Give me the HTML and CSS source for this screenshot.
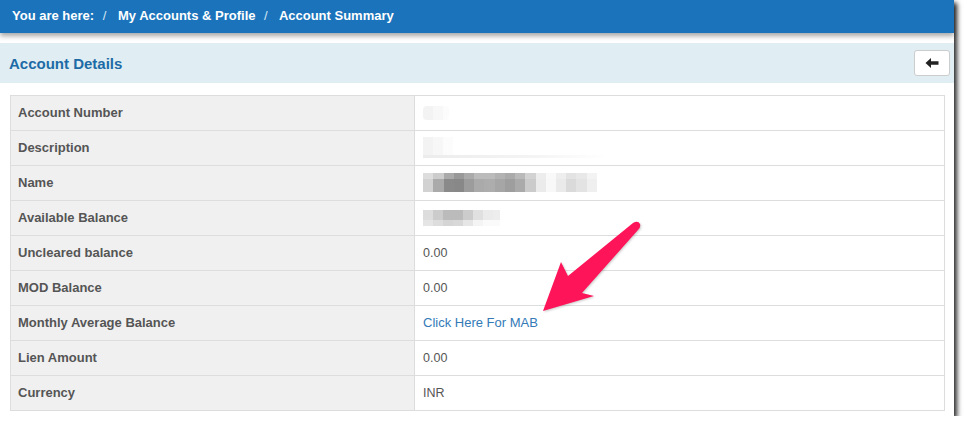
FILE: index.html
```html
<!DOCTYPE html>
<html lang="en">
<head>
  <meta charset="utf-8">
  <title>Account Summary</title>
  <link rel="stylesheet" href="styles.css">
</head>
<body>
<div class="page">
  <div class="breadcrumb">
    <span>You are here:</span>
    <span class="sep">/</span>
    <span>My Accounts &amp; Profile</span>
    <span class="sep">/</span>
    <span>Account Summary</span>
  </div>

  <div class="panel">
    <div class="panel-heading">
      <h3>Account Details</h3>
      <button class="btn-back" aria-label="Back">
        <svg width="14" height="12" viewBox="0 0 14 12">
          <path d="M0.5 6 L6 1 L6 4.2 L13.5 4.2 L13.5 7.8 L6 7.8 L6 11 Z" fill="#222"/>
        </svg>
      </button>
    </div>
    <div class="panel-body">
      <table class="details">
        <tr><th>Account Number</th><td><span class="blur blur-acct"></span></td></tr>
        <tr><th>Description</th><td><span class="blur blur-desc"></span></td></tr>
        <tr><th>Name</th><td><span class="blur blur-name"></span></td></tr>
        <tr><th>Available Balance</th><td><span class="blur blur-bal"></span></td></tr>
        <tr><th>Uncleared balance</th><td>0.00</td></tr>
        <tr><th>MOD Balance</th><td>0.00</td></tr>
        <tr><th>Monthly Average Balance</th><td><a href="#">Click Here For MAB</a></td></tr>
        <tr><th>Lien Amount</th><td>0.00</td></tr>
        <tr><th>Currency</th><td>INR</td></tr>
      </table>
    </div>
  </div>

  <!-- annotation arrow pointing at the MAB link -->
  <svg class="annotation" width="110" height="105" viewBox="0 0 110 105">
    <path d="M3 101 L21 52 L28 66 L93 13 Q98 10 100 14 Q101 17 98 20 L42 83 L54 86 Z" fill="#fe1458"/>
  </svg>
</div>
</body>
</html>
```

FILE: styles.css
```css
body {
  margin: 0;
  background: #fff;
  font-family: "Liberation Sans", Arial, sans-serif;
}

.page {
  position: relative;
  width: 954px;
  height: 416px;
  background: #fff;
  box-shadow: 3px 3px 5px rgba(0, 0, 0, 0.85);
}

/* top bar */
.breadcrumb {
  position: relative;
  z-index: 1;
  height: 33px;
  line-height: 32px;
  padding-left: 12px;
  background: #1b74bb;
  color: #fff;
  font-size: 13px;
  font-weight: bold;
  box-shadow: 0 3px 5px rgba(0, 0, 0, 0.35);
}

.breadcrumb .sep {
  font-weight: normal;
  color: #d6e6f3;
  margin: 0 8px 0 5px;
}

/* panel */
.panel {
  margin-top: 10px;
}

.panel-heading {
  display: flex;
  align-items: center;
  justify-content: space-between;
  height: 40px;
  padding: 0 4px 0 9px;
  background: #e0eef3;
}

.panel-heading h3 {
  margin: 0;
  font-size: 15px;
  font-weight: bold;
  color: #1d6ba6;
}

.btn-back {
  display: flex;
  align-items: center;
  justify-content: center;
  width: 36px;
  height: 26px;
  padding: 0;
  background: #fff;
  border: 1px solid #ccc;
  border-radius: 3px;
  cursor: pointer;
}

.panel-body {
  padding: 12px 9px 0 10px;
}

/* details table */
.details {
  width: 100%;
  border-collapse: collapse;
  border: 1px solid #ddd;
  font-size: 13px;
  color: #555;
}

.details th,
.details td {
  height: 33px;
  padding: 0 8px 1px 7px;
  border: 1px solid #ddd;
  text-align: left;
  vertical-align: middle;
}

.details th {
  width: 388px;
  background: #f0f0f0;
  font-weight: bold;
}

.details td {
  padding-left: 8px;
  font-size: 12.5px;
  background: #fff;
}

.details a {
  color: #337ab7;
  font-size: 13px;
  text-decoration: none;
}

/* masked values */
.blur {
  display: block;
}

.blur-acct {
  width: 26px;
  height: 14px;
  background: linear-gradient(to right, #f0f0f0 0 10px, #f6f6f6 10px 20px, #fbfbfb 20px 26px);
  border-radius: 4px;
  opacity: 0.8;
}

.blur-desc {
  width: 184px;
  height: 21px;
  background:
    linear-gradient(to right, #f3f3f3 0 10px, #f7f7f7 10px 20px, #fcfcfc 20px 30px, #fff 30px) top / 100% 18px no-repeat,
    linear-gradient(to right, #ececec, #f4f4f4 60%, #fff) bottom / 100% 3px no-repeat;
}

.blur-name {
  width: 174px;
  height: 19px;
  background:
    linear-gradient(to right, #ddd 0 10px, #ccc 10px 21px, #aaa 21px 31px, #999 31px 41px, #aaa 41px 51px, #bbb 51px 61px, #bbb 61px 72px, #b2b2b2 72px 82px, #aaa 82px 92px, #b9b9b9 92px 102px, #d2d2d2 102px 113px, #ededed 113px 123px, #f9f9f9 123px 133px, #eee 133px 143px, #e3e3e3 143px 153px, #e8e8e8 153px 164px, #f3f3f3 164px 174px) top / 100% 6px no-repeat,
    linear-gradient(to right, #d2d2d2 0 10px, #aaa 10px 21px, #8a8a8a 21px 31px, #888 31px 41px, #9c9c9c 41px 51px, #aaa 51px 61px, #adadad 61px 72px, #a6a6a6 72px 82px, #9e9e9e 82px 92px, #aaa 92px 102px, #cbcbcb 102px 113px, #ebebeb 113px 123px, #f8f8f8 123px 133px, #eaeaea 133px 143px, #dadada 143px 153px, #e3e3e3 153px 164px, #efefef 164px 174px) bottom / 100% 13px no-repeat;
}

.blur-bal {
  width: 77px;
  height: 16px;
  background:
    linear-gradient(to right, #ddd 0 10px, #ccc 10px 20px, #bbb 20px 30px, #bbb 30px 40px, #ccc 40px 50px, #e0e0e0 50px 60px, #ebebeb 60px 70px, #ededed 70px 77px) top / 100% 10px no-repeat,
    linear-gradient(to right, #e5e5e5 0 10px, #ddd 10px 20px, #d5d5d5 20px 30px, #d8d8d8 30px 40px, #e6e6e6 40px 50px, #f4f4f4 50px 60px, #fafafa 60px 77px) bottom / 100% 6px no-repeat;
}

/* annotation */
.annotation {
  position: absolute;
  left: 540px;
  top: 210px;
  filter: drop-shadow(1px 1px 1px rgba(0, 0, 0, 0.2));
}
```
